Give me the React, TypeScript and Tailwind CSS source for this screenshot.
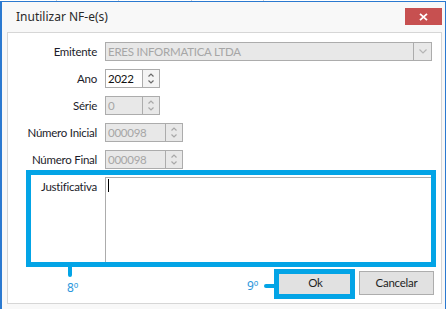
import React from "react";

const BLUE = "bg-[#03a4e6]";
const UI = "font-['Lato',sans-serif] text-[11.5px] tracking-[-0.25px]";

function Spin({ disabled }: { disabled?: boolean }) {
  const c = disabled ? "#a8a8a8" : "#6b6b6b";
  return (
    <div className={`w-[17px] h-full border-l border-[#acacac] flex flex-col items-center justify-center gap-[3px] ${disabled ? "bg-[#e8e8e8]" : "bg-[#f4f4f4]"}`}>
      <svg width="6" height="4" viewBox="0 0 6 4"><path d="M0.5 3.5 L3 1 L5.5 3.5" fill="none" stroke={c} strokeWidth="1.2" /></svg>
      <svg width="6" height="4" viewBox="0 0 6 4"><path d="M0.5 0.5 L3 3 L5.5 0.5" fill="none" stroke={c} strokeWidth="1.2" /></svg>
    </div>
  );
}

function SpinField({ value, width, disabled }: { value: string; width: string; disabled?: boolean }) {
  return (
    <div className={`${width} h-[19px] border border-[#acacac] flex ${disabled ? "bg-[#e8e8e8]" : "bg-white"}`}>
      <div className={`flex-1 pl-[2px] ${UI} leading-[17px] ${disabled ? "text-[#a6a6a6]" : "text-[#111]"}`}>{value}</div>
      <Spin disabled={disabled} />
    </div>
  );
}

function Row({ label, children }: { label: string; children: React.ReactNode }) {
  return (
    <div className="flex h-[19px] items-center">
      <div className={`w-[89px] text-right ${UI} text-[#1c1c2a] leading-[19px]`}>{label}</div>
      <div className="ml-[8px] flex-1 flex h-full">{children}</div>
    </div>
  );
}

export default function App() {
  return (
    <div className="w-[448px] h-[309px] bg-white overflow-hidden font-['Noto_Sans',sans-serif]">
      <div className="h-px flex">
        <div className="w-[57px] border-r border-[#d0d0d0]" />
        <div className="w-[62px] border-r border-[#d0d0d0]" />
        <div className="w-[73px] border-r border-[#d0d0d0]" />
        <div className="w-[72px] border-r border-[#d0d0d0]" />
      </div>
      <div className="w-[446px] h-[308px] bg-[#f8f8f8] border-l-2 border-t border-r border-[#2b79d0] flex flex-col">
        <div className="h-[30px] flex items-start justify-between">
          <div className="pl-[14px] pt-[6px] text-[12px] leading-[17px] text-[#2a2a2a]">Inutilizar NF-e(s)</div>
          <div className="mt-[6px] mr-[3px] w-[37px] h-[17px] bg-[#c75050] flex items-center justify-center">
            <svg width="9" height="8" viewBox="0 0 9 8"><path d="M1 0.8 L8 7.2 M8 0.8 L1 7.2" stroke="white" strokeWidth="1.8" /></svg>
          </div>
        </div>
        <div className="relative ml-[5px] mr-[3px] h-[272px] bg-white border border-[#d6d6d6] pt-[9px] pb-[8px] flex flex-col">
          <div className="flex flex-col gap-[8px] pr-[8px]">
            <Row label="Emitente">
              <div className="w-[327px] h-[19px] border border-[#acacac] bg-[#e8e8e8] flex">
                <div className={`flex-1 pl-[2px] ${UI} leading-[17px] text-[#a6a6a6]`}>ERES INFORMATICA LTDA</div>
                <div className="w-[18px] border-l border-[#acacac] flex items-center justify-center">
                  <svg width="8" height="5" viewBox="0 0 8 5"><path d="M0.5 0.5 L4 4 L7.5 0.5" fill="none" stroke="#b5b5b5" strokeWidth="1.2" /></svg>
                </div>
              </div>
            </Row>
            <Row label="Ano"><SpinField value="2022" width="w-[55px]" /></Row>
            <Row label="Série"><SpinField value="0" width="w-[55px]" disabled /></Row>
            <Row label="Número Inicial"><SpinField value="000098" width="w-[78px]" disabled /></Row>
            <Row label="Número Final"><SpinField value="000098" width="w-[78px]" disabled /></Row>
            <div className="flex h-[86px]">
              <div className={`w-[89px] text-right ${UI} text-[#1c1c2a] leading-[17px] pt-[1px]`}>Justificativa</div>
              <div className="ml-[8px] w-[327px] h-full border border-[#acacac] bg-white pl-[2px] pt-[1px]">
                <div className="w-px h-[13px] bg-black" />
              </div>
            </div>
          </div>
          <div className="mt-[8px] flex justify-end gap-[6px] pr-[7px]">
            <button className={`w-[75px] h-[24px] border border-[#adadad] bg-[#e1e1e1] ${UI} text-[#1f1f1f]`}>Ok</button>
            <button className={`w-[75px] h-[24px] border border-[#adadad] bg-[#e1e1e1] ${UI} text-[#1f1f1f]`}>Cancelar</button>
          </div>

          <div className="absolute left-[18px] top-[137px] w-[410px] h-[97px] border-[5px] border-[#03a4e6]" />
          <div className={`absolute left-[60px] top-[234px] w-[4px] h-[10px] rounded-b-full ${BLUE}`} />
          <div className="absolute left-[59px] top-[248px] text-[12px] leading-[14px] text-[#2b97dc]">8º</div>
          <div className="absolute left-[266px] top-[236px] w-[81px] h-[30px] border-[5px] border-[#03a4e6]" />
          <div className={`absolute left-[256px] top-[251px] w-[10px] h-[4px] rounded-l-full ${BLUE}`} />
          <div className="absolute left-[239px] top-[246px] text-[12px] leading-[14px] text-[#2b97dc]">9º</div>
        </div>
      </div>
    </div>
  );
}
